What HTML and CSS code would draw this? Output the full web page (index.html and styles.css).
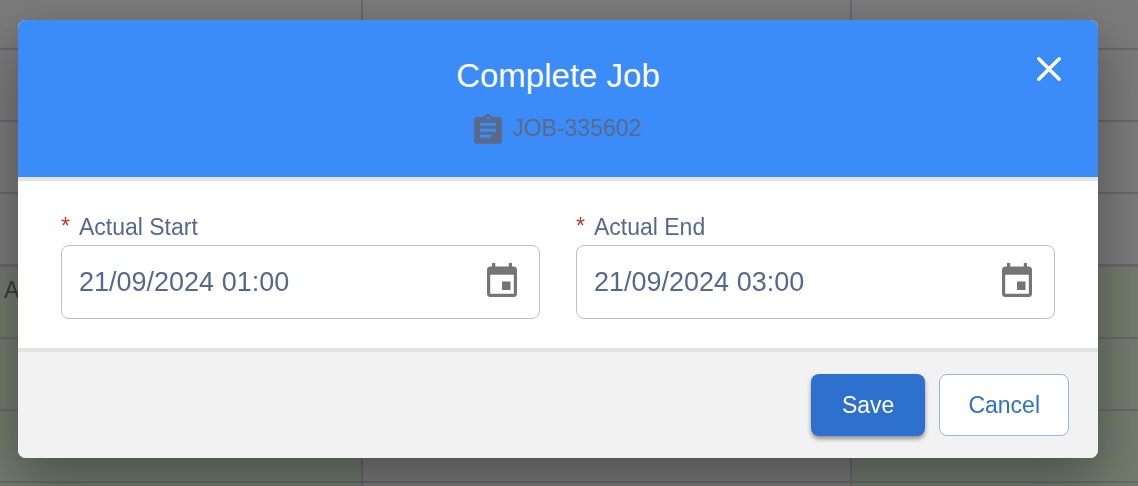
FILE: index.html
```html
<!DOCTYPE html>
<html lang="en">

<head>
    <meta charset="UTF-8">
    <meta name="viewport" content="width=device-width, initial-scale=1.0">
    <title>Complete Job</title>
    <link rel="stylesheet" href="styles.css">
</head>

<body>
    <!-- schedule behind the dialog -->
    <div class="schedule">
        <div class="cell"></div>
        <div class="cell"></div>
        <div class="cell"></div>
        <div class="cell"></div>
        <div class="cell"></div>
        <div class="cell"></div>
        <div class="cell"></div>
        <div class="cell"></div>
        <div class="cell"></div>
        <div class="cell day-end"></div>
        <div class="cell day-end"></div>
        <div class="cell day-end"></div>
        <div class="cell booked">A</div>
        <div class="cell"></div>
        <div class="cell booked"></div>
        <div class="cell booked"></div>
        <div class="cell"></div>
        <div class="cell booked"></div>
        <div class="cell booked"></div>
        <div class="cell"></div>
        <div class="cell booked"></div>
        <div class="cell booked"></div>
        <div class="cell"></div>
        <div class="cell booked"></div>
    </div>

    <div class="overlay">
        <form class="dialog" role="dialog" aria-labelledby="dialog-title">
            <header class="dialog-header">
                <h1 id="dialog-title">Complete Job</h1>
                <p class="job">
                    <svg class="job-icon" viewBox="0 0 28 30" aria-hidden="true">
                        <path fill="currentColor" fill-rule="evenodd" d="M3 2.700h7.200a4 4 0 0 1 7.600 0H25a3 3 0 0 1 3 3v21a3 3 0 0 1-3 3H3a3 3 0 0 1-3-3V5.700a3 3 0 0 1 3-3zM14 2.700a1.400 1.400 0 1 0 0 2.800a1.400 1.400 0 0 0 0-2.800zM6 8.700v3h16v-3zM6 14.700v3h16v-3zM6 20.700v3h11v-3z" />
                    </svg>
                    <span>JOB-335602</span>
                </p>
                <button type="button" class="close" aria-label="Close">
                    <svg viewBox="0 0 24 24" aria-hidden="true">
                        <path d="M1.800 1.800l20.400 20.400M22.200 1.800l-20.400 20.400" stroke="currentColor" stroke-width="3.400" stroke-linecap="round" />
                    </svg>
                </button>
            </header>

            <div class="dialog-body">
                <div class="field">
                    <label for="actual-start"><span class="required">*</span>Actual Start</label>
                    <div class="input-box">
                        <input type="text" id="actual-start" name="start" value="21/09/2024 01:00" required
                            autocomplete="off">
                        <button type="button" class="picker" aria-label="Choose start date">
                            <svg viewBox="0 0 30 34" aria-hidden="true">
                                <path fill="currentColor" fill-rule="evenodd" d="M5 0h3.300v3.500h13.500V0H25v3.500h1.500A3.500 3.500 0 0 1 30 7v23.500a3.500 3.500 0 0 1-3.500 3.500h-23A3.500 3.500 0 0 1 0 30.500V7a3.500 3.500 0 0 1 3.500-3.500H5zM3.200 11.700v19h23.600v-19zM15 18.500h8.500v8.500H15z" />
                            </svg>
                        </button>
                    </div>
                </div>
                <div class="field">
                    <label for="actual-end"><span class="required">*</span>Actual End</label>
                    <div class="input-box">
                        <input type="text" id="actual-end" name="end" value="21/09/2024 03:00" required
                            autocomplete="off">
                        <button type="button" class="picker" aria-label="Choose end date">
                            <svg viewBox="0 0 30 34" aria-hidden="true">
                                <path fill="currentColor" fill-rule="evenodd" d="M5 0h3.300v3.500h13.500V0H25v3.500h1.500A3.500 3.500 0 0 1 30 7v23.500a3.500 3.500 0 0 1-3.500 3.500h-23A3.500 3.500 0 0 1 0 30.500V7a3.500 3.500 0 0 1 3.500-3.500H5zM3.200 11.700v19h23.600v-19zM15 18.500h8.500v8.500H15z" />
                            </svg>
                        </button>
                    </div>
                </div>
            </div>

            <footer class="dialog-footer">
                <button type="submit" class="button save">Save</button>
                <button type="button" class="button cancel">Cancel</button>
            </footer>
        </form>
    </div>
</body>

</html>
```
FILE: styles.css
```css
*,
::before,
::after {
    margin: 0;
    padding: 0;
    box-sizing: border-box;
}

body {
    min-height: 100vh;
    overflow: hidden;
    font-family: "Liberation Sans", Arial, sans-serif;
    font-size: 23px;
    color: #54698d;
    background-color: #7b7b7b;
}

button,
input {
    font-family: inherit;
    color: inherit;
    border: none;
    background: none;
}

button {
    cursor: pointer;
}

svg {
    display: block;
}

/* schedule */
.schedule {
    position: fixed;
    inset: 0;
    display: grid;
    grid-template-columns: 363fr 489fr 286fr;
    grid-template-rows: 50px 72px 72px 73px;
    grid-auto-rows: 72px;
}

.cell {
    padding: 9px 4px;
    line-height: 28px;
    color: #3b3b3b;
    border-right: 2px solid #68686d;
    border-bottom: 2px solid #68686d;
}

.cell:nth-child(3n) {
    border-right: none;
}

.day-end {
    border-bottom-width: 3px;
}

.booked {
    background-color: #727b6e;
}

/* dialog */
.overlay {
    position: fixed;
    inset: 0;
    padding: 20px 40px 28px 18px;
}

.dialog {
    border-radius: 8px;
    background-color: #fff;
    box-shadow: 0 20px 54px rgba(0, 0, 0, .36);
}

.dialog-header {
    position: relative;
    padding: 36px 80px 32px;
    text-align: center;
    border-radius: 8px 8px 0 0;
    background-color: #3b8cf8;
}

.dialog-header h1 {
    font-size: 33px;
    font-weight: normal;
    line-height: 40px;
    color: #fff;
}

.job {
    display: flex;
    align-items: center;
    justify-content: center;
    gap: 10px;
    margin-top: 16px;
    line-height: 33px;
    color: #596a8b;
}

.job-icon {
    width: 28px;
    height: 30px;
}

.close {
    position: absolute;
    top: 37px;
    right: 37px;
    color: #fff;
}

.close svg {
    width: 24px;
    height: 24px;
}

.dialog-body {
    display: grid;
    grid-template-columns: 1fr 1fr;
    gap: 36px;
    padding: 30px 43px 29px;
    border-top: 4px solid #e4e4e6;
    border-bottom: 4px solid #e3e3e3;
}

.field label {
    display: flex;
    gap: 9px;
    margin-bottom: 2px;
    line-height: 32px;
}

.required {
    line-height: 30px;
    color: #c23934;
}

.input-box {
    display: flex;
    align-items: center;
    height: 74px;
    padding: 0 22px 0 17px;
    border: 1px solid #bfbfbf;
    border-radius: 8px;
}

.input-box input {
    flex: 1;
    min-width: 0;
    height: 100%;
    font-size: 27px;
    outline: none;
}

.picker {
    padding-bottom: 4px;
    color: #757575;
}

.picker svg {
    width: 30px;
    height: 34px;
}

.dialog-footer {
    display: flex;
    justify-content: flex-end;
    gap: 14px;
    padding: 22px 29px;
    border-radius: 0 0 8px 8px;
    background-color: #f2f2f2;
}

.button {
    height: 62px;
    padding: 0 31px;
    font-size: 23px;
    border-radius: 8px;
}

.save {
    color: #fff;
    background-color: #2e70cd;
    box-shadow: 0 3px 4px rgba(0, 0, 0, .4);
}

.cancel {
    padding: 0 28px;
    color: #2e70cd;
    border: 1px solid #93b8ea;
    background-color: #fff;
}
```
